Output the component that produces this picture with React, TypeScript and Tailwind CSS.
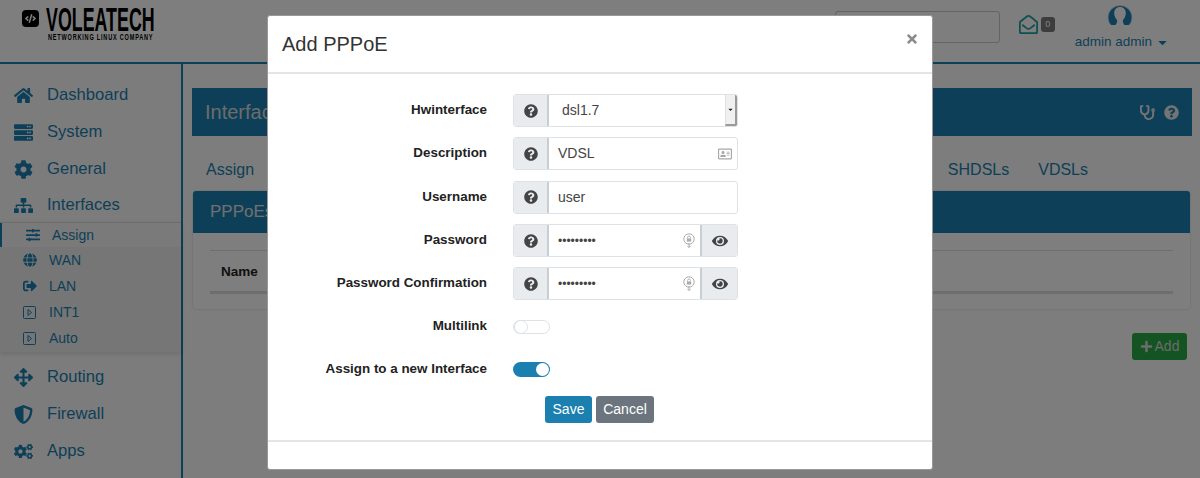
import React from "react";
import { FaHome, FaServer, FaCog, FaSitemap, FaSlidersH, FaGlobe, FaSignOutAlt, FaArrowsAlt, FaShieldAlt, FaCogs, FaQuestionCircle, FaEye, FaPlus, FaTimes, FaStethoscope, FaCode, FaCaretDown } from "react-icons/fa";
import { FaRegEnvelopeOpen, FaRegAddressCard } from "react-icons/fa";

const font = { fontFamily: '"Liberation Sans", Arial, sans-serif' };

function PlayBox() {
  return (
    <svg width="13" height="13" viewBox="0 0 13 13" fill="none" stroke="currentColor" strokeWidth="1">
      <rect x="0.5" y="0.5" width="12" height="12" rx="1" />
      <path d="M5 3.500l3.500 3-3.500 3z" />
    </svg>
  );
}

function NavItem({ icon, label }: { icon: React.ReactNode; label: string }) {
  return (
    <div className="flex h-[36.7px] items-center text-[16.6px] text-[#1b7fb0]">
      <span className="flex w-[47px] justify-center pl-[7px] pr-[7px] text-[19px]">{icon}</span>
      <span>{label}</span>
    </div>
  );
}

function SubItem({ icon, label, active }: { icon: React.ReactNode; label: string; active?: boolean }) {
  return (
    <div className={`flex items-center text-[14px] text-[#1b7fb0] ${active ? "h-[24px] border-l-2 border-[#1b7fb0] bg-[#f4f4f4] pl-[24px] text-[13.5px]" : "h-[26px] pl-[22.500px]"}`}>
      <span className={`flex justify-start text-[14px] ${active ? "w-[26px]" : "w-[26.500px]"}`}>{icon}</span>
      <span>{label}</span>
    </div>
  );
}

function Addon({ children, right }: { children: React.ReactNode; right?: boolean }) {
  return (
    <div className={`flex items-center justify-center bg-[#e9ecef] text-[14px] text-[#444] ${right ? "w-[37px] border-l-2 border-[#c9ced3]" : "w-[35px] border-r-2 border-[#c9ced3]"}`}>
      {children}
    </div>
  );
}

function LockRefresh() {
  return (
    <svg width="12" height="15" viewBox="0 0 12 15" fill="none" className="text-[#a9adb0]">
      <circle cx="6" cy="6" r="5.200" stroke="currentColor" strokeWidth="1" />
      <rect x="3.800" y="5.400" width="4.400" height="3.200" fill="currentColor" />
      <path d="M4.600 5.400V4.400a1.400 1.400 0 0 1 2.800 0v1" stroke="currentColor" strokeWidth="0.9" />
      <path d="M6 10v4.500M4.300 12.800L6 14.500l1.700-1.700" stroke="currentColor" strokeWidth="1" />
    </svg>
  );
}

function Row({ label, children, lift }: { label: string; children: React.ReactNode; lift?: boolean }) {
  return (
    <div className={`flex h-[43.3px] items-center ${lift ? "mt-[-0.5px]" : ""}`}>
      <div className="w-[219px] pb-[0.8px] text-right text-[13.4px] font-bold text-[#222]">{label}</div>
      <div className="ml-[26px] w-[225px]">{children}</div>
    </div>
  );
}

function Group({ value, right, addon, select, dots }: { value: string; right?: React.ReactNode; addon?: boolean; select?: boolean; dots?: boolean }) {
  return (
    <div className="flex h-[33px] overflow-hidden rounded-[3px] border border-[#dfe2e5] bg-white">
      <Addon><FaQuestionCircle /></Addon>
      <div className={`flex flex-1 items-center justify-between text-[#444] ${dots ? "text-[12px] pr-[5px]" : "text-[14px]"} ${select ? "pl-[13px]" : "pl-[9px] pr-[5px]"}`}>
        <span>{value}</span>
        {right}
        {select && (
          <span className="mt-[-1px] flex h-[31px] w-[12px] items-center justify-center border-r-2 border-b-2 border-l border-[#9a9a9a] border-l-[#e0e0e0] bg-[#f0f0f0] text-[7px] text-[#222]"><FaCaretDown /></span>
        )}
      </div>
      {addon && <Addon right><FaEye className="text-[16px]" /></Addon>}
    </div>
  );
}

export default function App() {
  return (
    <div style={font} className="relative h-[478px] w-[1200px] overflow-hidden bg-[#fafafa]">
      <header className="flex h-[64px] items-start border-b-2 border-[#1b7fb0] bg-[#fdfdfd]">
        <div className="ml-[22px] mt-[10px] flex h-[17px] w-[17px] items-center justify-center rounded-[4px] bg-black text-[11px] text-white"><FaCode /></div>
        <div className="ml-[7px] mt-[5px] w-[110px]">
          <div className="h-[28px] origin-left scale-x-[0.686] scale-y-[1.3] whitespace-nowrap text-[26px] font-bold leading-[28px] text-black">VOLEATECH</div>
          <div className="ml-[2px] origin-left scale-x-[0.655] whitespace-nowrap text-[8.5px] font-bold leading-[9px] tracking-[1.2px] text-black">NETWORKING LINUX COMPANY</div>
        </div>
        <div className="ml-auto flex items-start">
          <div className="mt-[11px] h-[32px] w-[165px] rounded-[3px] border border-[#c8c8c8]" />
          <div className="ml-[19px] mt-[15px] flex items-center text-[19px] text-[#1ea0a0]">
            <FaRegEnvelopeOpen />
            <span className="ml-[3px] flex h-[15px] w-[14px] items-center justify-center rounded-[3px] bg-[#7a7a7a] text-[9px] text-white">0</span>
          </div>
          <div className="ml-[20px] mr-[31px] mt-[5px] flex flex-col items-center text-[13.500px] text-[#1b7fb0]">
            <svg width="26" height="20" viewBox="0 0 26 20" className="mr-[3px]">
              <circle cx="13" cy="12.500" r="12.500" fill="#cfe0ea" />
              <circle cx="13" cy="12.500" r="11.500" fill="#1b7fb0" />
              <path d="M13 2c-3.500 0-5.800 2.500-5.800 6 0 3 1.300 5.500 2.800 7 .4 1.500-.2 3.500-1.500 5h9c-1.300-1.500-1.900-3.500-1.500-5 1.500-1.500 2.800-4 2.800-7 0-3.500-2.300-6-5.800-6z" fill="#fdfdfd" />
            </svg>
            <div className="mt-[7px] flex items-center">admin admin<span className="ml-[4px] text-[13px]"><FaCaretDown /></span></div>
          </div>
        </div>
      </header>

      <div className="flex h-[414px]">
        <aside className="w-[183px] shrink-0 border-r-2 border-[#1b7fb0] bg-[#f8f8f8] pt-[13.400px]">
          <NavItem icon={<FaHome />} label="Dashboard" />
          <NavItem icon={<FaServer />} label="System" />
          <NavItem icon={<FaCog />} label="General" />
          <NavItem icon={<FaSitemap />} label="Interfaces" />
          <div className="mt-[-2px] border-t border-[#d8d8d8] bg-[#ececec] pb-[1px] shadow-[0_2px_5px_rgba(0,0,0,0.12)]">
            <SubItem active icon={<FaSlidersH />} label="Assign" />
            <SubItem icon={<FaGlobe />} label="WAN" />
            <SubItem icon={<FaSignOutAlt />} label="LAN" />
            <SubItem icon={<PlayBox />} label="INT1" />
            <SubItem icon={<PlayBox />} label="Auto" />
          </div>
          <div className="mt-[7.300px]">
            <NavItem icon={<FaArrowsAlt />} label="Routing" />
            <NavItem icon={<FaShieldAlt />} label="Firewall" />
            <NavItem icon={<FaCogs />} label="Apps" />
          </div>
        </aside>

        <main className="flex-1 pl-[9px] pr-[8px] pt-[24px]">
          <div className="flex h-[48px] items-center justify-between bg-[#1b7fb0] pl-[13px] pr-[13px] text-white">
            <span className="text-[20px] text-[#d8d8d8]">Interfaces</span>
            <span className="flex items-center gap-[9px] text-[15px] text-[#e8e8e8]"><FaStethoscope /><FaQuestionCircle /></span>
          </div>
          <div className="flex h-[55px] items-center justify-between pl-[14px] pr-[104px] pt-[12px] text-[16px] text-[#1b7fb0]">
            <span>Assign</span>
            <span className="flex gap-[29px]"><span>SHDSLs</span><span>VDSLs</span></span>
          </div>
          <section className="ml-[1px] mr-[2px] rounded-[3px] bg-[#fcfcfc] shadow-[0_0_2px_rgba(0,0,0,0.2)]">
            <div className="flex h-[42px] items-center rounded-t-[3px] bg-[#1b7fb0] pl-[17px] text-[17px] text-[#e0e0e0]">PPPoEs</div>
            <div className="px-[17px] pb-[15px] pt-[17px]">
              <div className="flex h-[44px] items-center border-t border-b-[3px] border-t-[#dcdcdc] border-b-[#dcdcdc] pl-[11px] pt-[2px] text-[13.500px] font-bold text-[#222]">Name</div>
            </div>
          </section>
          <div className="mr-[5px] mt-[24px] flex justify-end">
            <button className="flex h-[27px] w-[55px] items-center justify-center gap-[2px] rounded-[3px] bg-[#28a745] text-[14px] text-[#d8d8d8]"><FaPlus className="text-[13px]" />Add</button>
          </div>
        </main>
      </div>

      <div className="absolute inset-0 bg-black/50" />

      <div className="absolute left-[267px] top-[15px] h-[455px] w-[666px] rounded-[3px] border border-[#999] bg-white">
        <div className="flex h-[58px] items-center justify-between border-b-2 border-[#e5e5e5] pl-[14px] pr-[13px]">
          <h2 className="text-[20px] text-[#333]">Add PPPoE</h2>
          <FaTimes className="mb-[10px] text-[14px] text-[#8a8a8a]" />
        </div>
        <div className="pt-[15px]">
          <Row label="Hwinterface"><Group value="dsl1.7" select /></Row>
          <Row label="Description"><Group value="VDSL" right={<FaRegAddressCard className="text-[14px] text-[#a8a8a8]" />} /></Row>
          <Row label="Username"><Group value="user" /></Row>
          <Row label="Password"><Group value="•••••••••" dots right={<LockRefresh />} addon /></Row>
          <Row label="Password Confirmation"><Group value="•••••••••" dots right={<LockRefresh />} addon /></Row>
          <Row label="Multilink" lift>
            <div className="relative h-[14px] w-[37px] rounded-full border border-[#dfe2e5] bg-white">
              <span className="absolute left-[0px] top-[-1px] h-[14px] w-[14px] rounded-full border border-[#dfe2e5] bg-white" />
            </div>
          </Row>
          <Row label="Assign to a new Interface">
            <div className="relative h-[15px] w-[37px] rounded-full bg-[#1b7fb0]">
              <span className="absolute right-[1px] top-[1px] h-[13px] w-[13px] rounded-full bg-white" />
            </div>
          </Row>
          <div className="ml-[277px] mt-[4.500px] flex gap-[4px]">
            <button className="h-[27px] w-[47px] rounded-[3px] bg-[#1b7fb0] text-[14px] text-white">Save</button>
            <button className="h-[27px] w-[58px] rounded-[3px] bg-[#6c757d] text-[14px] text-white">Cancel</button>
          </div>
        </div>
        <div className="absolute bottom-[27px] left-0 right-0 border-t-2 border-[#e5e5e5]" />
      </div>
    </div>
  );
}
